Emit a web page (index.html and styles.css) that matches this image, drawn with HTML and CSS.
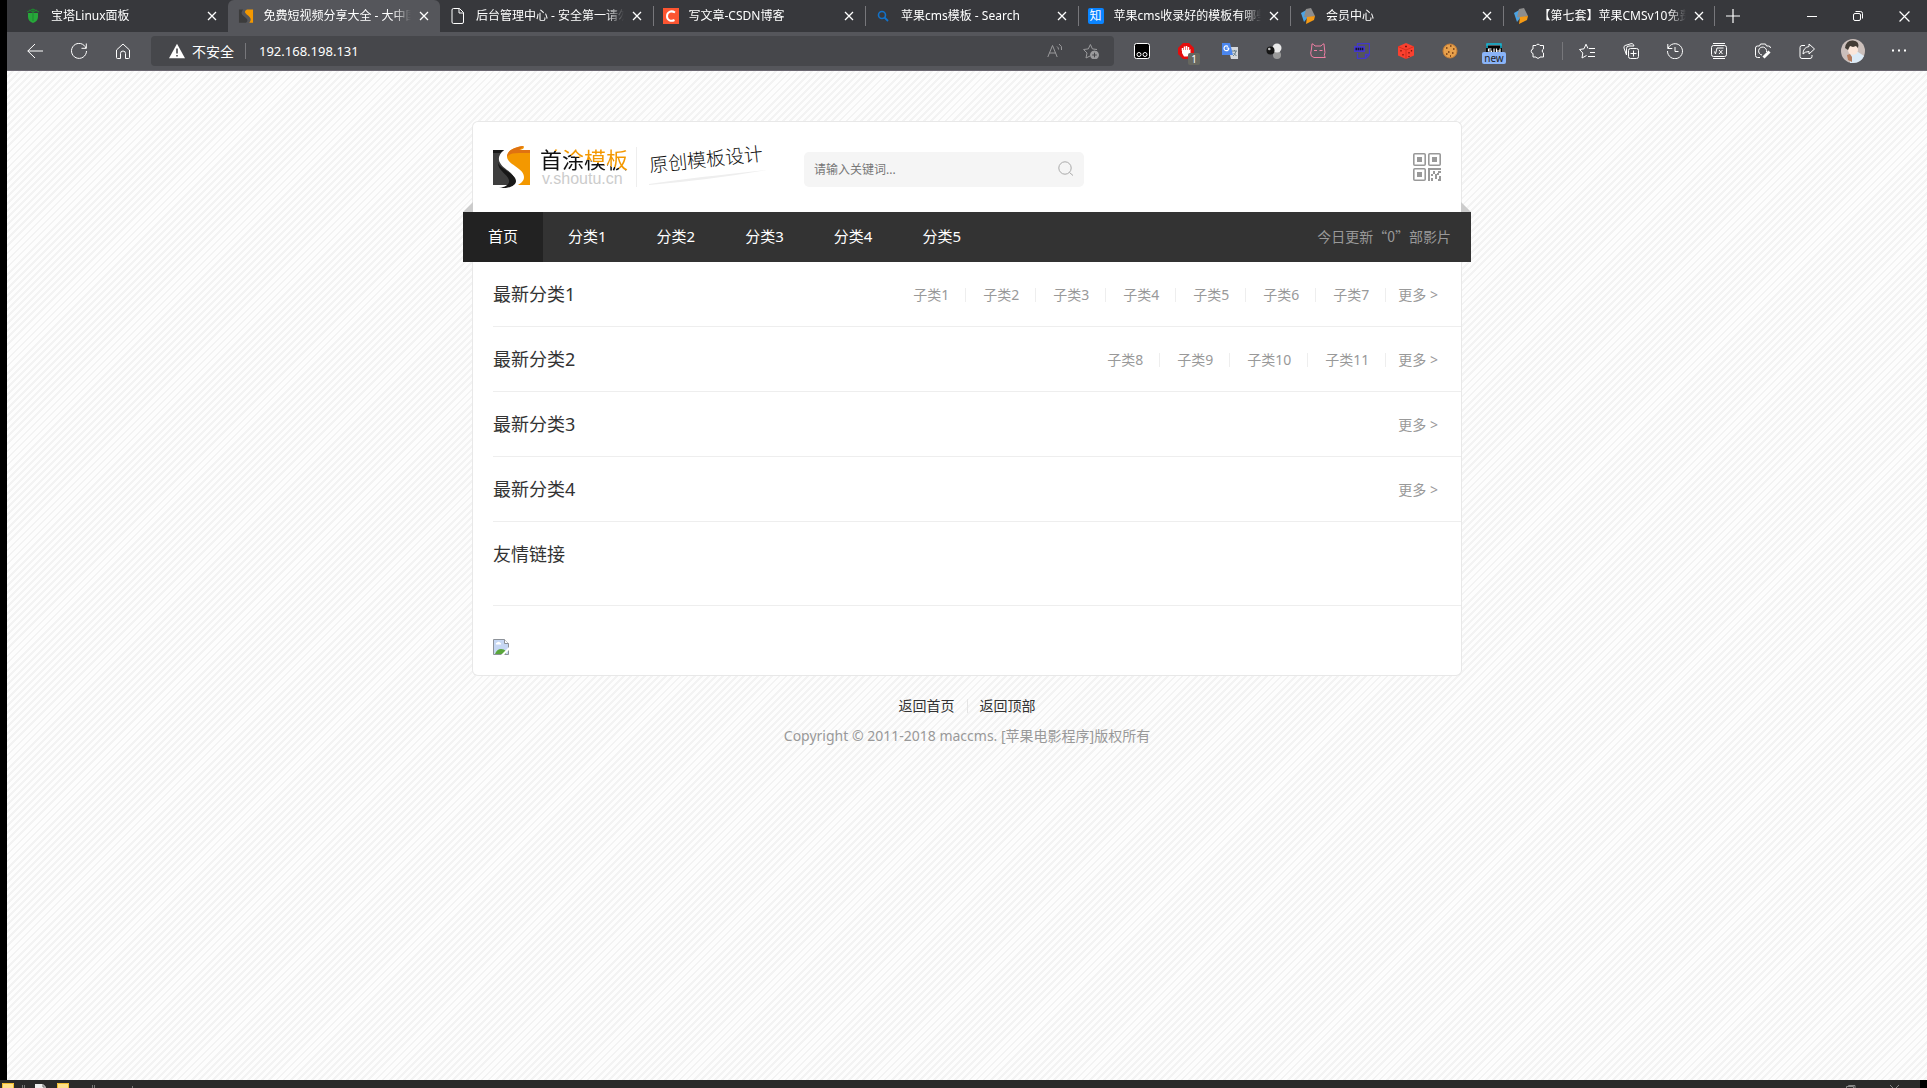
FILE: index.html
```html
<!DOCTYPE html>
<html lang="zh-CN">
<head>
<meta charset="utf-8">
<title>免费短视频分享大全 - 大中国</title>
<link rel="stylesheet" href="styles.css">
</head>
<body>
<svg width="0" height="0" class="defs" aria-hidden="true">
  <symbol id="x" viewBox="0 0 10 10"><path d="M1 1l8 8M9 1l-8 8" fill="none" stroke="#fff" stroke-width="1.3"/></symbol>
  <symbol id="cube" viewBox="0 0 16 16"><path d="M1 5l7-4v8l-4 5z" fill="#4ba3e3"/><path d="M6 1l5-1 4 8-6 2-5-1z" fill="#8d8d8d"/><path d="M7 9l8-1-1 4-8 4z" fill="#f59a14"/></symbol>
  <symbol id="folder" viewBox="0 0 12 12"><path d="M0 0h12v12H0z" fill="#ffe08a"/><path d="M.5 12V.5h11V12" fill="none" stroke="#f2bd2c"/></symbol>
</svg>

<div class="window">
  <header class="browser">
    <div class="tabstrip">
      <div class="tabs">
        <div class="tab">
          <svg class="fav" viewBox="0 0 16 16"><path d="M3 5h10v4c0 3-2 5-5 6-3-1-5-3-5-6z" fill="#27a83a"/><path d="M2 4l6-3 6 3M4 2l4 2 4-2M8 1v12" stroke="#1d8a2e" fill="none"/></svg>
          <button class="tab-title">宝塔Linux面板</button><button class="close" aria-label="关闭"><svg><use href="#x"/></svg></button>
        </div>
        <div class="tab active">
          <svg class="fav" viewBox="0 0 37 42"><path d="M0 4h11C3 14 8 18 16 24c7 5 9 10 2 15H0z" fill="#3c3c3c"/><path d="M37 4H21c-8 5-6 9 2 15 9 7 10 12 4 20h10z" fill="#f39800"/></svg>
          <button class="tab-title">免费短视频分享大全 - 大中国</button><button class="close" aria-label="关闭"><svg><use href="#x"/></svg></button>
        </div>
        <div class="tab">
          <svg class="fav" viewBox="0 0 16 16"><path d="M3.500.5h6l4 4v9.500a1.500 1.500 0 0 1-1.500 1.500h-8.500a1.500 1.500 0 0 1-1.500-1.500V2A1.500 1.500 0 0 1 3.500.5zM9 .5V5h4.500" fill="none" stroke="#fff"/></svg>
          <button class="tab-title">后台管理中心 - 安全第一请勿</button><button class="close" aria-label="关闭"><svg><use href="#x"/></svg></button>
        </div>
        <div class="tab line">
          <svg class="fav" viewBox="0 0 16 16"><path d="M0 0h16v16H0z" fill="#fc5531"/><path d="M12 4.500C8 2 4 4 4 8.300c0 4 4 5.500 7.500 3.700" fill="none" stroke="#fff" stroke-width="2"/></svg>
          <button class="tab-title">写文章-CSDN博客</button><button class="close" aria-label="关闭"><svg><use href="#x"/></svg></button>
        </div>
        <div class="tab line">
          <svg class="fav" viewBox="0 0 16 16"><circle cx="7" cy="7" r="3.500" fill="none" stroke="#1272c9" stroke-width="1.600"/><path d="M9.500 9.500L13 13" stroke="#1272c9" stroke-width="1.800"/></svg>
          <button class="tab-title">苹果cms模板 - Search</button><button class="close" aria-label="关闭"><svg><use href="#x"/></svg></button>
        </div>
        <div class="tab line">
          <span class="fav zhi">知</span>
          <button class="tab-title">苹果cms收录好的模板有哪些</button><button class="close" aria-label="关闭"><svg><use href="#x"/></svg></button>
        </div>
        <div class="tab line">
          <svg class="fav"><use href="#cube"/></svg>
          <button class="tab-title">会员中心</button><button class="close" aria-label="关闭"><svg><use href="#x"/></svg></button>
        </div>
        <div class="tab line">
          <svg class="fav"><use href="#cube"/></svg>
          <button class="tab-title">【第七套】苹果CMSv10免费</button><button class="close" aria-label="关闭"><svg><use href="#x"/></svg></button>
        </div>
      </div>
      <button class="newtab" aria-label="新建标签页"><svg width="14" height="14" viewBox="0 0 14 14"><path d="M7 0v14M0 7h14" stroke="#fff" stroke-width="1.200"/></svg></button>
      <div class="controls">
        <button aria-label="最小化"><svg width="10" height="10" viewBox="0 0 10 10"><path d="M0 5.500h10" stroke="#fff"/></svg></button>
        <button aria-label="还原"><svg width="10" height="10" viewBox="0 0 10 10"><rect x=".5" y="2.500" width="7" height="7" rx="1.500" fill="none" stroke="#fff"/><path d="M2.500.5h5a2 2 0 0 1 2 2v5" fill="none" stroke="#fff"/></svg></button>
        <button aria-label="关闭窗口"><svg width="11" height="11" viewBox="0 0 10 10"><path d="M.5.5l9 9M9.500.5l-9 9" stroke="#fff" stroke-width="1.100"/></svg></button>
      </div>
    </div>

    <div class="toolbar">
      <div class="group">
        <button aria-label="后退"><svg viewBox="0 0 16 16"><path d="M16 8H.8M8 1L.8 8 8 15"/></svg></button>
        <button aria-label="刷新"><svg viewBox="0 0 16 16"><path d="M15 5.200A7.500 7.500 0 1 0 15.500 8M15.300.5v4.800h-4.800"/></svg></button>
        <button aria-label="主页"><svg viewBox="0 0 16 16"><path d="M1.500 7L8 1l6.500 6v7.500a1 1 0 0 1-1 1h-3v-5a2.500 2.500 0 0 0-5 0v5h-3a1 1 0 0 1-1-1z"/></svg></button>
      </div>
      <div class="address">
        <svg class="warn" viewBox="0 0 16 16"><path d="M8 .8L16 15.200H0z" fill="#fff"/><path d="M8 5.500v5M8 12v1.600" stroke="#46474b" stroke-width="1.600"/></svg>
        <label for="url">不安全</label>
        <input id="url" type="text" value="192.168.198.131">
        <button aria-label="朗读"><svg viewBox="0 0 16 16" class="dim"><path d="M.8 14L5.500 2.500 10.200 14M2.500 10h6M10 3.500q1.500 1 1.500 3M12 1q3.500 2 2.500 6"/></svg></button>
        <button aria-label="收藏"><svg viewBox="0 0 16 16" class="dim"><path d="M7 13l-4 2 1-5L.6 6.500l4.700-.6L7.400 1.500l2 4.400 4.600.6"/><circle cx="11.500" cy="12" r="4" fill="#9a9a9c"/><path d="M11.500 9.700v4.600M9.200 12h4.600" stroke="#46474b"/></svg></button>
      </div>
      <div class="group extensions">
        <button aria-label="Tampermonkey"><svg viewBox="0 0 16 16"><rect x=".5" y=".5" width="15" height="15" rx="2" fill="#000"/><circle cx="5" cy="11.500" r="2"/><circle cx="11" cy="11.500" r="2"/></svg></button>
        <button class="badged" aria-label="AdBlock"><svg viewBox="0 0 16 16"><path d="M5 0h6l5 5v6l-5 5H5l-5-5V5z" fill="#e40d0d" stroke="none"/><path d="M4.500 8V5m2 2V3.500m2 3.500V3m2 4V4" stroke-width="1.500"/><path d="M4 7h7.500l1-1v4l-3 3.500H6L4 10z" fill="#fff" stroke="none"/></svg><span class="count">1</span></button>
        <button aria-label="翻译"><svg viewBox="0 0 16 16"><path d="M6 4h10v12H9z" fill="#d5d8dc" stroke="none"/><path d="M0 0h8l3 12H0z" fill="#4a86ee" stroke="none"/><path d="M7 5H4.500M6.800 5A2.400 2.400 0 1 1 6 3.500" stroke-width="1.200"/><path d="M10 8h5M12.500 7v1M14 8q-1 4-3 5M11.500 10l3 3" stroke="#667f8b"/></svg></button>
        <button aria-label="球"><svg viewBox="0 0 16 16"><circle cx="11" cy="12" r="4" fill="#999" stroke="none"/><circle cx="11" cy="5" r="4.500" fill="#e9e9e9" stroke="none"/><circle cx="4.500" cy="7.500" r="4" fill="#161616" stroke="none"/><circle cx="3.300" cy="6" r="1.300" fill="#bbb" stroke="none"/></svg></button>
        <button aria-label="猫"><svg viewBox="0 0 16 16"><path d="M1.500 6L2 .8q1.500 0 3 2.200h6q1.500-2.200 3-2.200l.5 5.200q1 3.500-.2 6.500l1 2H4Q.5 14 .7 10z M4 7.500h3M9.500 7.500h3" stroke="#ee7fa3"/></svg></button>
        <button aria-label="JSON"><svg viewBox="0 0 16 16"><path d="M3.500 3V.5h12v11l-4 4h-8V10M11.500 15.500v-4h4" stroke="#4338c8" stroke-width="1.300"/><rect y="3" width="11" height="6" fill="#4338c8" stroke="none"/><path d="M1.500 6h8" stroke="#15132f" stroke-width="2.500" stroke-dasharray="1.500 .6"/></svg></button>
        <button aria-label="骰子"><svg viewBox="0 0 16 16"><path d="M8 0l8 3.500v9L8 16l-8-3.500v-9z" fill="#fb402f" stroke="none"/><path d="M0 3.500L8 7l8-3.500M8 7v9" stroke="#d6301f"/><path d="M3 7v1.500M5 11v1.500M11 9v1.500M13.500 7v1.500M11 13v1M7 3.500h2" stroke="#7c150d" stroke-width="1.300"/></svg></button>
        <button aria-label="Cookie"><svg viewBox="0 0 16 16"><circle cx="8" cy="8" r="7" fill="#e7a04b" stroke="#c67f38"/><path d="M4 5h1.500M8 3h1.500M11 6h1.500M6 9h1.500M10 10h1.500M4 11h1.500M8 13h1" stroke="#6d3612" stroke-width="1.300"/></svg></button>
        <button class="badged" aria-label="SIH"><svg viewBox="0 0 16 16"><rect x="0" y="3" width="16" height="10" fill="#050505" stroke="none"/><path d="M1 5V1h14v4" stroke="#10b9d9" stroke-width="1.500"/><path d="M5.500 6H2.500v2h3v2h-3M8 5.500V11M10.500 5.500V11M14 5.500V11M10.500 8H14" stroke-width="1.200"/></svg><span class="new">new</span></button>
        <button aria-label="扩展"><svg viewBox="0 0 16 16"><path d="M3 2.500h3a2.200 2.200 0 0 1 4 0h3.500V6a2.200 2.200 0 0 0 0 4v4H10a2.200 2.200 0 0 1-4 0H3v-3.500a2.300 2.300 0 0 1 0-4.500z"/></svg></button>
      </div>
      <div class="group split">
        <button aria-label="收藏夹"><svg viewBox="0 0 16 16"><path d="M10 5.500h6M11 9.500h5M9 13.500h7M7.500 12.500L3 15l.8-5L.5 6.500 5 5.800 7 1.200l2 4.300"/></svg></button>
        <button aria-label="集锦"><svg viewBox="0 0 16 16"><rect x="5.500" y="5.500" width="10" height="10" rx="2"/><path d="M10.500 7.500v6M7.500 10.500h6M3.500 12L1 5a2 2 0 0 1 1.200-2.500L8 .7a2 2 0 0 1 2.500 1.200L11 3H6a2.500 2.500 0 0 0-2.500 2.500z"/></svg></button>
        <button aria-label="历史记录"><svg viewBox="0 0 16 16"><path d="M1 5.500A7.500 7.500 0 1 1 .5 8M.8 1v4.500h4.500M8 4v4.500h3.500"/></svg></button>
        <button aria-label="数学求解器"><svg viewBox="0 0 16 16"><rect x=".5" y="2.500" width="15" height="11" rx="2"/><path d="M2 .5h12M2 15.500h12M3.500 8.500l1 2.500 1.500-6h6.500M8 7l3.500 4M11.500 7L8 11"/></svg></button>
        <button aria-label="截图"><svg viewBox="0 0 16 16"><path d="M5 14.500H2.500a2 2 0 0 1-2-2V5a2 2 0 0 1 2-2h2l1-2h5l1 2h2a2 2 0 0 1 2 2"/><path d="M7 12a4 4 0 1 1 4.500-3"/><path d="M8.500 14.500l6-6" stroke-width="3"/></svg></button>
        <button aria-label="分享"><svg viewBox="0 0 16 16"><path d="M6 2.500H3a2 2 0 0 0-2 2v9a2 2 0 0 0 2 2h8a2 2 0 0 0 2-2V12M10 1l5.500 5L10 11V8.500q-4 0-6 2.500 0-6.500 6-7.500z"/></svg></button>
        <button class="profile" aria-label="个人资料"><svg class="avatar" viewBox="0 0 24 24"><circle cx="12" cy="12" r="12" fill="#cbbfbb"/><path d="M9 13h8l6 4q-3 7-11 7H9z" fill="#dcebf7"/><ellipse cx="12" cy="11" rx="5" ry="5" fill="#fae6da"/><path d="M4 9Q5 1 12 1.500 19 2 17 9l-2-2-3 1-3-1-2 4z" fill="#423c35"/><path d="M6 16l3-1 2 3v5l-4-2z" fill="#b57c5e"/></svg></button>
        <button aria-label="更多"><svg viewBox="0 0 16 16"><path d="M1 7.500h2M7 7.500h2M13 7.500h2" stroke-width="2"/></svg></button>
      </div>
    </div>
  </header>

  <main class="page">
    <div class="site">
      <div class="masthead">
        <a class="logo" href="#">
          <svg width="37" height="42" viewBox="0 0 37 42"><path d="M0 4h11C2 12 6 18 14 24c9 6 10 12 3 15H0z" fill="#3e3e3e"/><path d="M0 4h11L7 7H0z" fill="#181818"/><path d="M5 16c0 6 18 12 18 19 0 5-8 8-17 7 7-1 11-4 10-8-2-6-12-10-11-18z" fill="#181818"/><path d="M37 4H27C34 2 29 0 31 0 22 1 14 4 14 11c1 8 17 11 17 20 0 4-3 6-6 8h12z" fill="#f39800"/><path d="M31 0C22 1 14 4 14 11c2-3 6-4 12-4h11V4H26z" fill="#df7211"/></svg>
          <span class="brand"><strong>首涂模板</strong><small>v.shoutu.cn</small></span>
          <span class="slogan"><em>原创模板设计</em><svg width="120" height="16" viewBox="0 0 120 16"><path d="M0 15Q50 8 118 1 60 11 0 16z" fill="#eee"/></svg></span>
        </a>
        <form class="search">
          <input type="text" placeholder="请输入关键词..." aria-label="搜索">
          <button type="button" aria-label="搜索"><svg width="16" height="16" viewBox="0 0 16 16"><circle cx="7" cy="7" r="6.200" fill="none" stroke="#aaa"/><path d="M11.500 11.500l3.500 3" stroke="#aaa"/></svg></button>
        </form>
        <button class="qr" aria-label="二维码"><svg width="28" height="28" viewBox="0 0 28 28"><g fill="none" stroke="#999" stroke-width="1.600"><rect x=".8" y=".8" width="11.400" height="11.400" rx="1"/><rect x="15.800" y=".8" width="11.400" height="11.400" rx="1"/><rect x=".8" y="15.800" width="11.400" height="11.400" rx="1"/></g><path d="M4 4h5v5H4zM19 4h5v5h-5zM4 19h5v5H4zM15 15h13v2H17v11h-2zM20 18h2v3h-2zM25 18h3v2h-3zM18 21h2v2h-2zM22 21h2v5h-2zM24 20h2v2h-2zM18 25h2v3h-2zM26 23h2v5h-3v-2h1z" fill="#999"/></svg></button>
      </div>
      <nav class="nav">
        <a class="on" href="#">首页</a><a href="#">分类1</a><a href="#">分类2</a><a href="#">分类3</a><a href="#">分类4</a><a href="#">分类5</a>
        <span class="today">今日更新“0”部影片</span>
      </nav>
      <div class="panels">
        <section><h2>最新分类1</h2><div class="sub"><a href="#">子类1</a><a href="#">子类2</a><a href="#">子类3</a><a href="#">子类4</a><a href="#">子类5</a><a href="#">子类6</a><a href="#">子类7</a><a class="more" href="#">更多 &gt;</a></div></section>
        <section><h2>最新分类2</h2><div class="sub"><a href="#">子类8</a><a href="#">子类9</a><a href="#">子类10</a><a href="#">子类11</a><a class="more" href="#">更多 &gt;</a></div></section>
        <section><h2>最新分类3</h2><div class="sub"><a class="more" href="#">更多 &gt;</a></div></section>
        <section><h2>最新分类4</h2><div class="sub"><a class="more" href="#">更多 &gt;</a></div></section>
        <section class="links"><h2>友情链接</h2></section>
        <div class="picture"><svg width="16" height="16" viewBox="0 0 16 16"><path d="M.5.5h11l4 4v11H.5z" fill="#c6d7f3" stroke="#8d9299"/><path d="M3 5.500a2 1.500 0 0 1 1-2 2 2 0 0 1 3 0 1.500 1.500 0 0 1 1 2z" fill="#fff"/><path d="M2 15q2-5 6-5 3 0 5 2v3z" fill="#5aa63b"/><path d="M11.500.5v4h4" fill="#fff" stroke="#8d9299"/><path d="M16 8L8 16h3l5-5z" fill="#fff"/></svg></div>
      </div>
    </div>
    <footer class="foot">
      <p class="jump"><a href="#">返回首页</a><a href="#">返回顶部</a></p>
      <p class="copy">Copyright © 2011-2018 maccms. [苹果电影程序]版权所有</p>
    </footer>
  </main>
</div>

<div class="taskbar">
  <svg width="140" height="8" viewBox="0 0 140 8"><use href="#folder" x="2" y="3" width="12" height="12"/><path d="M22.500 5v3M24.500 5v3M92.500 5v3M94.500 5v3M132.500 6v2" stroke="#777"/><path d="M35 4h8l3 3v1H35z" fill="#eee"/><path d="M43 4v3h3" stroke="#666" fill="none"/><use href="#folder" x="57" y="3" width="12" height="12"/></svg>
  <svg width="83" height="8" viewBox="0 0 83 8"><path d="M2.500 8V6.500h7V8M4.500 6V5.500H11V8M46 5l3 3M55 5l-3 3" fill="none" stroke="#888"/><path d="M76 0h7v8h-7z" fill="#000"/></svg>
</div>
</body>
</html>
```
FILE: styles.css
```css
* { box-sizing: border-box; }
body {
  margin: 0;
  min-height: 100vh;
  display: flex;
  flex-direction: column;
  background: #000;
  color: #333;
  font-family: "Noto Sans", "Noto Sans CJK SC", sans-serif;
  font-size: 14px;
}
button, input { font: inherit; border: 0; padding: 0; margin: 0; background: none; color: inherit; outline: 0; }
a { color: inherit; text-decoration: none; }
h2, p { margin: 0; font-weight: 400; }
svg { display: block; flex: none; }
.defs { position: absolute; }
.window { flex: 1; margin-left: 7px; display: flex; flex-direction: column; }

/* browser chrome */
.browser { background: #55565b; color: #fff; border-bottom: 1px solid #6a6670; }
.tabstrip { display: flex; height: 32px; background: #37383c; padding-left: 8px; }
.tabs { flex: 1; min-width: 0; display: flex; }
.tab { flex: 1 1 0; min-width: 0; display: flex; align-items: center; padding: 0 10px; position: relative; }
.tab.active { background: #55565b; border-radius: 6px 6px 0 0; }
.tab.line::before, .tab:last-child::after { content: ""; position: absolute; left: 0; top: 6px; width: 1px; height: 20px; background: #77777b; }
.tab:last-child::after { left: auto; right: 0; }
.fav { width: 16px; height: 16px; margin-right: 10px; flex: none; }
.zhi { background: #0a84ff; border-radius: 2px; font-size: 12px; line-height: 16px; text-align: center; }
.tab-title {
  flex: 1; min-width: 0; overflow: hidden; white-space: nowrap; text-align: left; font-size: 12px; line-height: 20px;
  -webkit-mask-image: linear-gradient(to right, #000 88%, transparent);
  mask-image: linear-gradient(to right, #000 88%, transparent);
}
.close { width: 10px; height: 10px; margin: 0 1px 0 8px; }
.close svg { width: 10px; height: 10px; }
.newtab { width: 36px; display: grid; place-items: center; }
.controls { display: flex; width: 176px; padding-left: 38px; }
.controls button { flex: 1; display: grid; place-items: center; }

.toolbar { display: flex; align-items: center; height: 38px; padding-right: 6px; }
.group { display: flex; }
.group button { width: 44px; height: 30px; display: grid; place-items: center; position: relative; }
.group .profile { width: 48px; }
.group:first-child { padding: 0 6px; }
.group button svg, .address button svg, .warn { width: 16px; height: 16px; }
.group svg, .address button svg { fill: none; stroke: #fff; }
.group button .avatar { width: 24px; height: 24px; stroke: none; }
.extensions { padding: 0 2px 0 6px; }
.split { border-image: linear-gradient(transparent 7px, #77777b 7px 23px, transparent 23px) 1; border-left: 1px solid; padding-left: 2px; }
.address { flex: 1; display: flex; align-items: center; height: 30px; padding: 0 5px 0 18px; background: #46474b; border-radius: 4px; }
.address label { margin: 0 11px 0 7px; }
.address input { flex: 1; min-width: 0; font-size: 13px; height: 16px; padding-left: 13px; border-left: 1px solid #77777b; }
.address button { width: 36px; height: 30px; display: grid; place-items: center; }
.address button .dim { stroke: #9a9a9c; }
.count, .new { position: absolute; font-size: 10px; line-height: 12px; border-radius: 2px; }
.count { right: 8px; bottom: 1px; padding: 0 3px; background: #66675f; }
.new { left: 10px; right: 10px; bottom: 2px; background: #8ab4f8; color: #222; text-align: center; }

/* page */
.page {
  flex: 1;
  padding-top: 50px;
  background: repeating-linear-gradient(135deg, #fdfdfd 0 3px, #f3f3f3 3px 5px);
}
.site { width: 100%; max-width: 1008px; margin: 0 auto; }
.masthead {
  position: relative; display: flex; align-items: center; height: 91px; margin: 0 9px; padding: 0 20px;
  background: #fff; border: 1px solid #e8e8e8; border-bottom: 0; border-radius: 6px 6px 0 0;
}
.masthead::before, .masthead::after { content: ""; position: absolute; bottom: 0; border: 5px solid transparent; border-bottom-color: #ccc; }
.masthead::before { left: -10px; border-right-color: #ccc; }
.masthead::after { right: -10px; border-left-color: #ccc; }
.logo { display: flex; align-items: center; }
.brand { margin-left: 10px; display: flex; flex-direction: column; width: 97px; border-right: 1px solid #eee; }
.brand strong {
  align-self: flex-start; font-size: 22px; line-height: 24px; font-weight: 400; white-space: nowrap;
  background: linear-gradient(to top right, #111 50%, #f39800 50%);
  -webkit-background-clip: text; background-clip: text; color: transparent;
}
.brand small { font-family: "Liberation Sans", sans-serif; font-size: 16px; line-height: 16px; color: #ccc; padding-left: 2px; }
.slogan { width: 120px; margin-left: 12px; }
.slogan em { display: block; font-style: normal; font-weight: 300; font-size: 19px; line-height: 20px; color: #111; transform: rotate(-6deg); white-space: nowrap; }
.search { display: flex; align-items: center; width: 280px; height: 35px; margin: 4px 0 0 35px; padding: 0 10px; background: #f5f5f5; border-radius: 5px; }
.search input { flex: 1; min-width: 0; font-size: 12px; }
.search input::placeholder { color: #777; }
.qr { margin-left: auto; }
.nav { display: flex; height: 50px; line-height: 48px; background: #333; color: #fff; font-size: 15px; }
.nav a { padding: 0 25px; }
.nav .on { background: #222; }
.today { margin-left: auto; padding-right: 20px; font-size: 14px; color: #999; font-family: "Noto Sans CJK SC", sans-serif; }
.panels { margin: 0 9px; padding-left: 20px; background: #fff; border: 1px solid #e8e8e8; border-top: 0; border-radius: 0 0 6px 6px; }
.panels section { display: flex; justify-content: space-between; align-items: center; height: 65px; border-bottom: 1px solid #eee; }
.panels h2 { font-size: 18px; line-height: 24px; color: #333; }
.sub { display: flex; padding: 2px 23px 0 0; line-height: 14px; color: #999; }
.sub a { padding: 0 16px 0 17px; border-right: 1px solid #eee; }
.sub .more { padding: 0 0 0 12px; border: 0; }
.panels .links { height: 84px; padding-top: 20px; align-items: flex-start; }
.picture { padding: 33px 0 20px; }
.foot { padding-top: 15px; text-align: center; line-height: 30px; color: #999; }
.jump { display: flex; justify-content: center; align-items: center; height: 30px; line-height: 14px; color: #333; }
.jump a { padding: 0 12px; }
.jump a + a { border-left: 1px solid #e5e5e5; }

.taskbar { display: flex; justify-content: space-between; height: 8px; background: #2a2a2a; overflow: hidden; }
```
